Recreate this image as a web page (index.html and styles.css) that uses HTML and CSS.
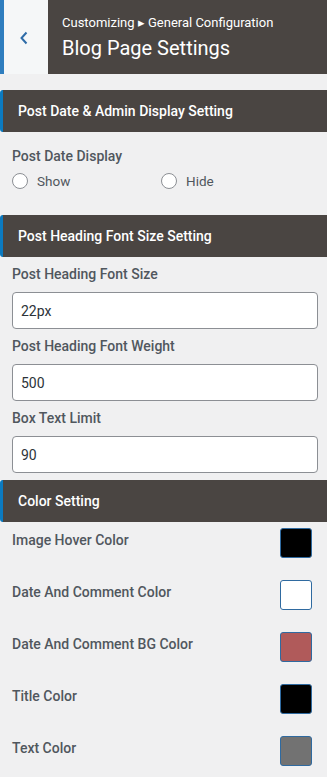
FILE: index.html
```html
<!DOCTYPE html>
<html lang="en">
<head>
  <meta charset="UTF-8">
  <meta name="viewport" content="width=device-width, initial-scale=1.0">
  <title>Blog Page Settings</title>
  <link rel="stylesheet" href="styles.css">
</head>
<body>
  <!-- Panel header -->
  <div class="panel-head">
    <button class="back-btn" aria-label="Back">
      <svg width="12" height="14" viewBox="0 0 12 14"><path d="M8.5 1.5 L3.5 7 L8.5 12.5" fill="none" stroke="#2e6ca8" stroke-width="2"/></svg>
    </button>
    <div class="panel-title">
      <span class="crumb">Customizing &#9656; General Configuration</span>
      <h1>Blog Page Settings</h1>
    </div>
  </div>

  <!-- Post date -->
  <div class="section-head">Post Date &amp; Admin Display Setting</div>
  <div class="section-body">
    <span class="field-label">Post Date Display</span>
    <div class="radio-row">
      <label class="radio"><span class="radio-dot"></span>Show</label>
      <label class="radio"><span class="radio-dot"></span>Hide</label>
    </div>
  </div>

  <!-- Heading font -->
  <div class="section-head">Post Heading Font Size Setting</div>
  <div class="section-body fields">
    <label class="field-label">Post Heading Font Size</label>
    <input class="text-input" type="text" value="22px">
    <label class="field-label">Post Heading Font Weight</label>
    <input class="text-input" type="text" value="500">
    <label class="field-label">Box Text Limit</label>
    <input class="text-input" type="text" value="90">
  </div>

  <!-- Colors -->
  <div class="section-head">Color Setting</div>
  <div class="color-list">
    <div class="color-row"><span class="field-label">Image Hover Color</span><span class="swatch" style="background:#000000"></span></div>
    <div class="color-row"><span class="field-label">Date And Comment Color</span><span class="swatch" style="background:#ffffff"></span></div>
    <div class="color-row"><span class="field-label">Date And Comment BG Color</span><span class="swatch" style="background:#b05a5a"></span></div>
    <div class="color-row"><span class="field-label">Title Color</span><span class="swatch" style="background:#000000"></span></div>
    <div class="color-row"><span class="field-label">Text Color</span><span class="swatch" style="background:#727272"></span></div>
  </div>
</body>
</html>
```

FILE: styles.css
```css
:root {
  --color-bg: #f0f0f1;
  --color-dark: #4a4542;
  --color-blue: #2f7ebf;
  --color-label: #50575e;
  --font-main: 'Roboto', 'Liberation Sans', sans-serif;
}

* {
  margin: 0;
  padding: 0;
  box-sizing: border-box;
}

body {
  background-color: var(--color-bg);
  font-family: var(--font-main);
  color: var(--color-label);
  width: 327px;
  overflow-x: hidden;
}

.panel-head {
  display: flex;
  height: 74px;
  margin-bottom: 16px;
}

.back-btn {
  width: 48px;
  background: #f5f7f8;
  border: none;
  border-left: 4px solid var(--color-blue);
  display: flex;
  align-items: center;
  justify-content: center;
  padding: 2px 4px 0 0;
}

.panel-title {
  flex: 1;
  background: var(--color-dark);
  color: #fff;
  padding: 15px 14px 0;
  display: flex;
  flex-direction: column;
}

.crumb {
  font-size: 13px;
  line-height: 16px;
}

.panel-title h1 {
  font-size: 20px;
  font-weight: 400;
  line-height: 26px;
  margin-top: 4px;
}

.section-head {
  background: var(--color-dark);
  color: #fff;
  height: 42px;
  display: flex;
  align-items: center;
  font-size: 14px;
  font-weight: 500;
  border-left: 3px solid #0b7ac0;
  border-radius: 3px 0 0 3px;
  padding-left: 15px;
}

.section-body {
  padding: 15px 12px 26px;
  display: flex;
  flex-direction: column;
}

.field-label {
  font-size: 14px;
  font-weight: 500;
  line-height: 18px;
  color: var(--color-label);
}

.radio-row {
  display: flex;
  margin-top: 8px;
}

.radio {
  display: flex;
  align-items: center;
  gap: 9px;
  width: 149px;
  font-size: 13.5px;
  color: var(--color-label);
}

.radio-dot {
  width: 16px;
  height: 16px;
  border: 1px solid #8c8f94;
  border-radius: 50%;
  background: #fff;
}

.fields {
  padding: 8px 9px 7px 12px;
}

.text-input {
  height: 37px;
  margin: 9px 0 8px;
  border: 1px solid #8c8f94;
  border-radius: 4px;
  background: #fff;
  padding: 0 8px;
  font-family: var(--font-main);
  font-size: 14px;
  color: #2c3338;
}

.text-input:last-child {
  margin-bottom: 0;
}

.color-list {
  padding: 6px 15px 0 12px;
}

.color-row {
  display: flex;
  justify-content: space-between;
  align-items: flex-start;
  height: 52px;
}

.color-row .field-label {
  margin-top: 3px;
}

.swatch {
  width: 32px;
  height: 30px;
  border: 1px solid #2f6aa0;
  border-radius: 3px;
}
```
